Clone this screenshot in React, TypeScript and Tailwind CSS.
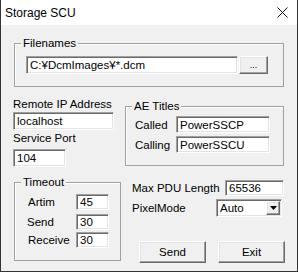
import React from 'react'

const font = { fontFamily: '"Liberation Sans", Arial, sans-serif' }

const sunken =
  'bg-white border border-t-[#a0a0a0] border-l-[#a0a0a0] border-r-white border-b-white shadow-[inset_1px_1px_0_#696969,inset_-1px_-1px_0_#e3e3e3]'
const raised =
  'bg-[#f0f0f0] border border-t-white border-l-white border-r-[#696969] border-b-[#696969] shadow-[inset_-1px_-1px_0_#a0a0a0,inset_1px_1px_0_#e3e3e3]'

function Field({ value, className }: { value: string; className: string }) {
  return (
    <div className={`${sunken} ${className} flex items-center pl-[3px] text-[11.5px] leading-[14px] whitespace-nowrap overflow-hidden`}>
      {value}
    </div>
  )
}

function Group({ label, className, children }: { label: string; className: string; children: React.ReactNode }) {
  return (
    <div className={`relative border border-[#a0a0a0] shadow-[inset_1px_1px_0_#fff] ${className}`}>
      <span className="absolute -top-[8px] left-[6px] bg-[#f0f0f0] px-[2px] text-[11.5px] leading-[14px]">{label}</span>
      {children}
    </div>
  )
}

export default function App() {
  return (
    <div style={font} className="w-[298px] h-[272px] flex flex-col border-x border-b border-[#333] text-black bg-[#f0f0f0]">
      {/* title bar */}
      <div className="h-[25px] bg-white flex items-center justify-between pl-[4px] pr-[9px] shrink-0">
        <span className="text-[12px] leading-[14px] mt-[1px]">Storage SCU</span>
        <svg width="11" height="11" viewBox="0 0 11 11">
          <path d="M0.5 0.5 L10.5 10.5 M10.5 0.5 L0.5 10.5" stroke="#111" strokeWidth="1" />
        </svg>
      </div>

      <div className="flex flex-col pl-[12px]">
        {/* Filenames */}
        <Group label="Filenames" className="mt-[18px] ml-[1px] w-[270px] h-[44px]">
          <div className="flex mt-[12px] ml-[11px]">
            <Field value="C:¥DcmImages¥*.dcm" className="w-[212px] h-[18px]" />
            <button className={`${raised} ml-[1px] w-[29px] h-[18px] text-[9px] leading-[10px] flex items-center justify-center`}>
              ...
            </button>
          </div>
        </Group>

        {/* Remote + AE titles */}
        <div className="flex items-start">
          <div className="flex flex-col w-[112px]">
            <span className="mt-[10px] h-[14px] text-[11.5px] leading-[14px]">Remote IP Address</span>
            <Field value="localhost" className="mt-[1px] w-[101px] h-[18px]" />
            <span className="mt-[1px] h-[14px] text-[11.5px] leading-[14px]">Service Port</span>
            <Field value="104" className="mt-[4px] w-[53px] h-[18px]" />
          </div>
          <Group label="AE Titles" className="mt-[19px] w-[159px] h-[60px]">
            <div className="flex flex-col gap-[3px] mt-[9px] ml-[9px]">
              <div className="flex items-center">
                <span className="w-[41px] text-[11.5px] leading-[14px]">Called</span>
                <Field value="PowerSSCP" className="w-[94px] h-[17px]" />
              </div>
              <div className="flex items-center">
                <span className="w-[41px] text-[11.5px] leading-[14px]">Calling</span>
                <Field value="PowerSSCU" className="w-[94px] h-[17px]" />
              </div>
            </div>
          </Group>
        </div>

        {/* Timeout + right side */}
        <div className="flex items-start mt-[13px]">
          <Group label="Timeout" className="mt-[2px] ml-[1px] w-[107px] h-[79px]">
            <div className="flex flex-col mt-[11px] ml-[12px]">
              <div className="flex items-center">
                <span className="w-[49px] pl-[1px] text-[11.5px] leading-[14px]">Artim</span>
                <Field value="45" className="w-[33px] h-[16px]" />
              </div>
              <div className="flex items-center mt-[4px]">
                <span className="w-[49px] text-[11.5px] leading-[14px]">Send</span>
                <Field value="30" className="w-[33px] h-[16px]" />
              </div>
              <div className="flex items-center mt-[2px]">
                <span className="w-[49px] pl-[1px] text-[11.5px] leading-[14px]">Receive</span>
                <Field value="30" className="w-[33px] h-[16px]" />
              </div>
            </div>
          </Group>

          <div className="flex flex-col ml-[11px]">
            <div className="flex items-center">
              <span className="w-[93px] text-[11.5px] leading-[14px] whitespace-nowrap">Max PDU Length</span>
              <Field value="65536" className="w-[59px] h-[16px]" />
            </div>
            <div className="flex items-center mt-[3px]">
              <span className="w-[84px] text-[11.5px] leading-[14px]">PixelMode</span>
              <div className={`${sunken} w-[66px] h-[18px] flex items-center justify-between pl-[3px] pr-[1px]`}>
                <span className="text-[11.5px] leading-[14px]">Auto</span>
                <div className={`${raised} w-[14px] h-[14px] flex items-center justify-center`}>
                  <svg width="7" height="4" viewBox="0 0 7 4">
                    <path d="M0 0 H7 L3.5 4 Z" fill="#000" />
                  </svg>
                </div>
              </div>
            </div>
            <div className="flex mt-[24px] ml-[7px] gap-[12px]">
              <button className={`${raised} w-[67px] h-[22px] text-[11.5px] leading-[14px]`}>Send</button>
              <button className={`${raised} w-[67px] h-[22px] text-[11.5px] leading-[14px]`}>Exit</button>
            </div>
          </div>
        </div>
      </div>
    </div>
  )
}
